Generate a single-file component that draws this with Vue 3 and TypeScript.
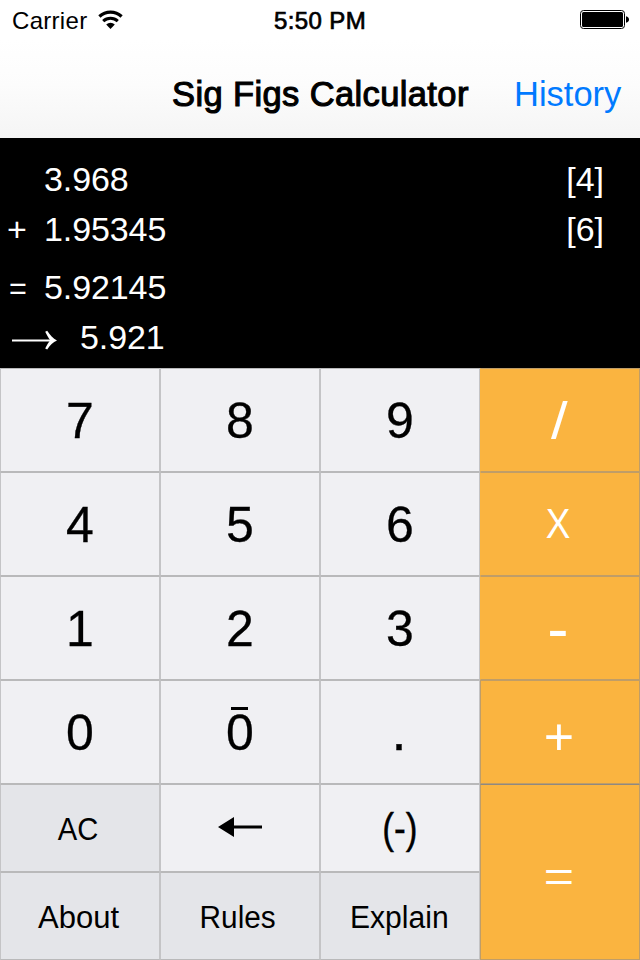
<script setup lang="ts">
interface Key {
  label: string
  kind: 'digit' | 'util' | 'op'
  name: string
}

const keys: Key[] = [
  { label: '7', kind: 'digit', name: 'seven' },
  { label: '8', kind: 'digit', name: 'eight' },
  { label: '9', kind: 'digit', name: 'nine' },
  { label: '/', kind: 'op', name: 'divide' },
  { label: '4', kind: 'digit', name: 'four' },
  { label: '5', kind: 'digit', name: 'five' },
  { label: '6', kind: 'digit', name: 'six' },
  { label: 'X', kind: 'op', name: 'times' },
  { label: '1', kind: 'digit', name: 'one' },
  { label: '2', kind: 'digit', name: 'two' },
  { label: '3', kind: 'digit', name: 'three' },
  { label: '-', kind: 'op', name: 'minus' },
  { label: '0', kind: 'digit', name: 'zero' },
  { label: '0', kind: 'digit', name: 'sigzero' },
  { label: '.', kind: 'digit', name: 'point' },
  { label: '+', kind: 'op', name: 'plus' },
  { label: 'AC', kind: 'util', name: 'clear' },
  { label: '', kind: 'digit', name: 'back' },
  { label: '(-)', kind: 'digit', name: 'negate' },
  { label: '=', kind: 'op', name: 'equals' },
  { label: 'About', kind: 'util', name: 'about' },
  { label: 'Rules', kind: 'util', name: 'rules' },
  { label: 'Explain', kind: 'util', name: 'explain' },
]
</script>

<template>
  <div class="screen">
    <header class="top">
      <div class="status">
        <div class="carrier">
          <span class="carrier-name">Carrier</span>
          <svg class="wifi" width="26" height="20" viewBox="0 0 26 20">
            <path d="M1.4 6.5A16.2 16.2 0 0 1 23.6 6.5" fill="none" stroke="#000" stroke-width="3.2" />
            <path d="M5.2 11.2A10.6 10.6 0 0 1 19.8 11.2" fill="none" stroke="#000" stroke-width="3" />
            <path d="M8.2 14.6A6 6 0 0 1 16.8 14.6L12.5 19Z" fill="#000" />
          </svg>
        </div>
        <span class="time">5:50 PM</span>
        <svg class="battery" width="50" height="20" viewBox="0 0 50 20">
          <rect x="0.5" y="0.5" width="44" height="18" rx="3" fill="#fff" stroke="#000" />
          <rect x="2" y="2" width="41" height="15" rx="1.5" fill="#000" />
          <path d="M46 6.2Q49 7 49 9.5T46 12.8Z" fill="#000" />
        </svg>
      </div>
      <nav class="nav">
        <h1 class="title">Sig Figs Calculator</h1>
        <a class="history">History</a>
      </nav>
    </header>

    <section class="display">
      <div class="line"><span class="sign"></span><span class="num">3.968</span><span class="sig">[4]</span></div>
      <div class="line"><span class="sign">+</span><span class="num">1.95345</span><span class="sig">[6]</span></div>
      <div class="line total"><span class="sign eq">=</span><span class="num">5.92145</span></div>
      <div class="line rounded">
        <svg class="arrow" width="48" height="20" viewBox="0 0 48 20">
          <path d="M1 10.5H43" stroke="#fff" stroke-width="2.2" />
          <path d="M34.2 1.8C36 5.5 37.5 8 39.2 10.3C37.5 12.5 36 15 34.2 18.4L36.2 19.4C39 15.4 42 12.3 46 10.5C42 8.5 39 5.2 36.2 0.8Z" fill="#fff" />
        </svg>
        <span class="num">5.921</span>
      </div>
    </section>

    <main class="pad">
      <button v-for="k in keys" :key="k.name" class="key" :class="[k.kind, k.name]">
        <svg v-if="k.name === 'back'" class="back-arrow" width="44" height="20" viewBox="0 0 44 20">
          <path d="M0 10L16 0V8.4H44V11.6H16V20Z" fill="#000" />
        </svg>
        <span v-else class="glyph">{{ k.label }}</span>
      </button>
    </main>
  </div>
</template>

<style>
body {
  background: #000;
}
</style>

<style scoped>
.screen {
  width: 640px;
  height: 960px;
  display: flex;
  flex-direction: column;
  overflow: hidden;
  font-family: "Liberation Sans", Arial, sans-serif;
  color: #000;
}
.top {
  height: 138px;
  background: linear-gradient(#fff 0, #fff 40px, #fcfcfc 85px, #f5f5f5 138px);
}
.status {
  height: 40px;
  display: grid;
  grid-template-columns: 1fr auto 1fr;
  align-items: center;
  padding: 0 10px 0 12px;
  font-size: 24px;
}
.carrier {
  display: flex;
  align-items: center;
  gap: 11px;
}
.carrier-name {
  font-size: 24px;
  letter-spacing: 0.3px;
  padding-top: 1px;
}
.time {
  letter-spacing: 0.4px;
  padding-top: 1px;
  margin-right: 2px;
  -webkit-text-stroke: 0.7px #000;
}
.battery {
  justify-self: end;
}
.nav {
  height: 98px;
  display: grid;
  grid-template-columns: 172px 1fr 126px;
  align-items: center;
  padding-top: 11px;
  box-sizing: border-box;
}
.title {
  grid-column: 2;
  margin: 0;
  font-size: 34.5px;
  font-weight: 400;
  letter-spacing: 0.38px;
  -webkit-text-stroke: 1.1px #000;
  white-space: nowrap;
}
.history {
  font-size: 34.5px;
  color: #007aff;
}
.display {
  height: 230px;
  box-sizing: border-box;
  padding-top: 16px;
  background: #000;
  color: #fff;
  font-size: 34px;
}
.num {
  letter-spacing: -0.1px;
}
.line {
  height: 50px;
  display: flex;
  align-items: center;
  padding: 0 36px 0 7px;
}
.line.total {
  margin-top: 8px;
}
.sign {
  width: 37px;
}
.eq {
  transform: translate(2px, 1px) scale(0.9);
  transform-origin: left center;
}
.sig {
  margin-left: auto;
}
.arrow {
  margin: 6px 21px 0 4px;
}
.pad {
  height: 592px;
  display: grid;
  grid-template-columns: repeat(4, 160px);
  grid-template-rows: repeat(4, 104px) repeat(2, 88px);
}
.key {
  display: flex;
  align-items: center;
  justify-content: center;
  margin: 0;
  padding: 0;
  border: 1px solid;
  border-color: #b9b9ba #c4c4c6;
  font-family: inherit;
  color: #000;
  overflow: hidden;
}
.glyph {
  display: block;
  line-height: 1;
}
.digit {
  background: #f0f0f3;
  font-size: 50px;
}
.digit .glyph {
  transform: translateY(1px);
  -webkit-text-stroke: 0.3px #000;
}
.util {
  background: #e4e5e9;
  font-size: 31px;
}
.op {
  background: #fab440;
  border-color: #bf9d68;
  color: #fff;
  font-size: 52px;
}
.divide,
.times,
.minus {
  border-left-color: #fab440;
}
.equals {
  grid-column: 4;
  grid-row: 5 / span 2;
  border-top-color: #8f8980;
}
.sigzero .glyph {
  position: relative;
}
.sigzero .glyph::before {
  content: "";
  position: absolute;
  left: 5px;
  top: -1px;
  width: 17px;
  height: 3px;
  background: #000;
}
.divide .glyph {
  transform: translate(-1px, 1px) scaleX(1.15);
}
.times .glyph {
  font-size: 42px;
  transform: translateX(-2px) scaleX(0.88);
}
.minus .glyph {
  font-size: 64px;
  transform: translate(-2px, 1px);
}
.plus .glyph {
  transform: translate(-1px, 5px);
}
.equals .glyph {
  transform: translate(-1px, 5px) scaleY(0.8);
}
.point .glyph {
  font-size: 54px;
  transform: translate(-1px, -1px);
}
.negate .glyph {
  font-size: 42px;
  -webkit-text-stroke-width: 0.4px;
  transform: translateY(1px) scaleX(0.84);
}
.clear .glyph {
  transform: translate(-1.5px, 0.5px) scaleX(0.94);
}
.about .glyph {
  transform: translate(-1.5px, 0.5px);
}
.rules .glyph {
  transform: translate(-2px, 0.5px) scaleX(0.96);
}
.explain .glyph {
  transform: translate(-0.5px, 0.5px) scaleX(0.97);
}
.back-arrow {
  margin-bottom: 3px;
}
</style>
